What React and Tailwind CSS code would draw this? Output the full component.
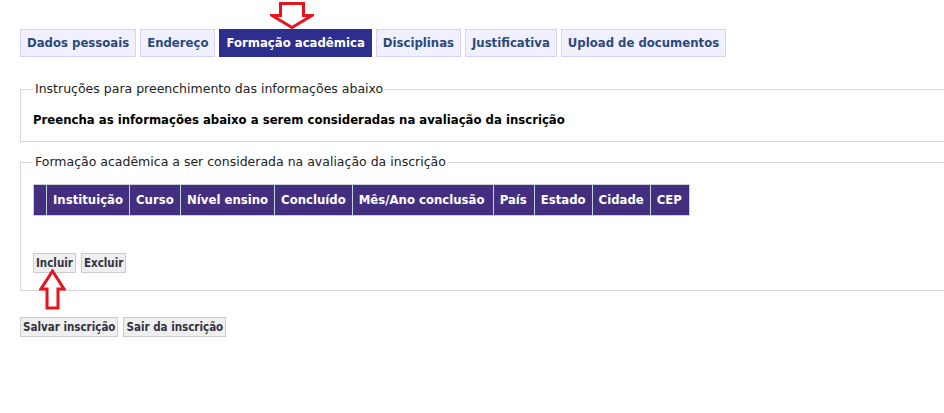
import React from "react";

const font = { fontFamily: "'DejaVu Sans Condensed', 'DejaVu Sans', sans-serif" };
const wide = { fontFamily: "'DejaVu Sans', sans-serif" };

const tabs = [
  "Dados pessoais",
  "Endereço",
  "Formação acadêmica",
  "Disciplinas",
  "Justificativa",
  "Upload de documentos",
];

const cols = [
  ["Instituição", "w-[83px]"],
  ["Curso", "w-[51px]"],
  ["Nível ensino", "w-[94px]"],
  ["Concluído", "w-[77px]"],
  ["Mês/Ano conclusão", "w-[141px]"],
  ["País", "w-[41px]"],
  ["Estado", "w-[57px]"],
  ["Cidade", "w-[58px]"],
  ["CEP", "w-[39px]"],
];

function DownArrow() {
  return (
    <svg className="absolute left-[270px] top-[2px]" width="44" height="27" viewBox="0 0 44 27">
      <path d="M10.5 1.5 H33.5 V13.5 H42 L22 25.5 L2 13.5 H10.5 Z" fill="white" stroke="#e8141c" strokeWidth="3" strokeLinejoin="miter" />
    </svg>
  );
}

function UpArrow() {
  return (
    <svg className="absolute left-[39px] top-[269px]" width="27" height="41" viewBox="0 0 27 41">
      <path d="M13.5 2 L25 20 H19 V39 H8 V20 H2 Z" fill="white" stroke="#e8141c" strokeWidth="3" strokeLinejoin="miter" />
    </svg>
  );
}

function Btn({ children }) {
  return (
    <button className="px-[2px] h-[20px] border border-[#cccccc] bg-[#efefef] text-[#333344] font-bold text-[11.5px] leading-[14px]">
      {children}
    </button>
  );
}

export default function App() {
  return (
    <div className="relative w-[944px] h-[413px] overflow-hidden bg-white text-[13px] leading-[16px]" style={font}>
      <DownArrow />
      <div className="pt-[29px] pl-[20px]">
        <div className="flex gap-[4px]">
          {tabs.map((t) =>
            t === "Formação acadêmica" ? (
              <div key={t} className="px-[6px] py-[5px] border border-[#2e2e8e] bg-[#2e2e8e] text-white font-bold">
                {t}
              </div>
            ) : (
              <div key={t} className="px-[6px] py-[5px] border border-[#d4d0ff] bg-[#f1f0ff] text-[#2b4a7c] font-bold">
                {t}
              </div>
            )
          )}
        </div>

        <fieldset className="mt-[24px] mr-[-20px] border border-[#dcd8d8] px-[12px] pt-[15px] pb-[13px]">
          <legend className="px-[2px] text-[#222] text-[12.5px]" style={wide}>Instruções para preenchimento das informações abaixo</legend>
          <div className="font-bold text-black">Preencha as informações abaixo a serem consideradas na avaliação da inscrição</div>
        </fieldset>

        <fieldset className="mt-[12px] mr-[-20px] border border-[#dcd8d8] px-[12px] pt-[14px] pb-[17px]">
          <legend className="px-[2px] text-[#222] text-[12.5px]" style={wide}>Formação acadêmica a ser considerada na avaliação da inscrição</legend>
          <table className="border-collapse bg-[#432e7f] text-white font-bold">
            <thead>
              <tr>
                <th className="w-[13px] border border-[#c4d4d6]"></th>
                {cols.map(([c, w]) => (
                  <th key={c} className={`${w} px-[6px] py-[7px] border border-[#c4d4d6] font-bold whitespace-nowrap text-left`}>
                    {c}
                  </th>
                ))}
              </tr>
            </thead>
          </table>
          <div className="mt-[37px] flex gap-[5px]">
            <Btn>Incluir</Btn>
            <Btn>Excluir</Btn>
          </div>
        </fieldset>

        <div className="mt-[26px] flex gap-[5px]">
          <Btn>Salvar inscrição</Btn>
          <Btn>Sair da inscrição</Btn>
        </div>
      </div>
      <UpArrow />
    </div>
  );
}
